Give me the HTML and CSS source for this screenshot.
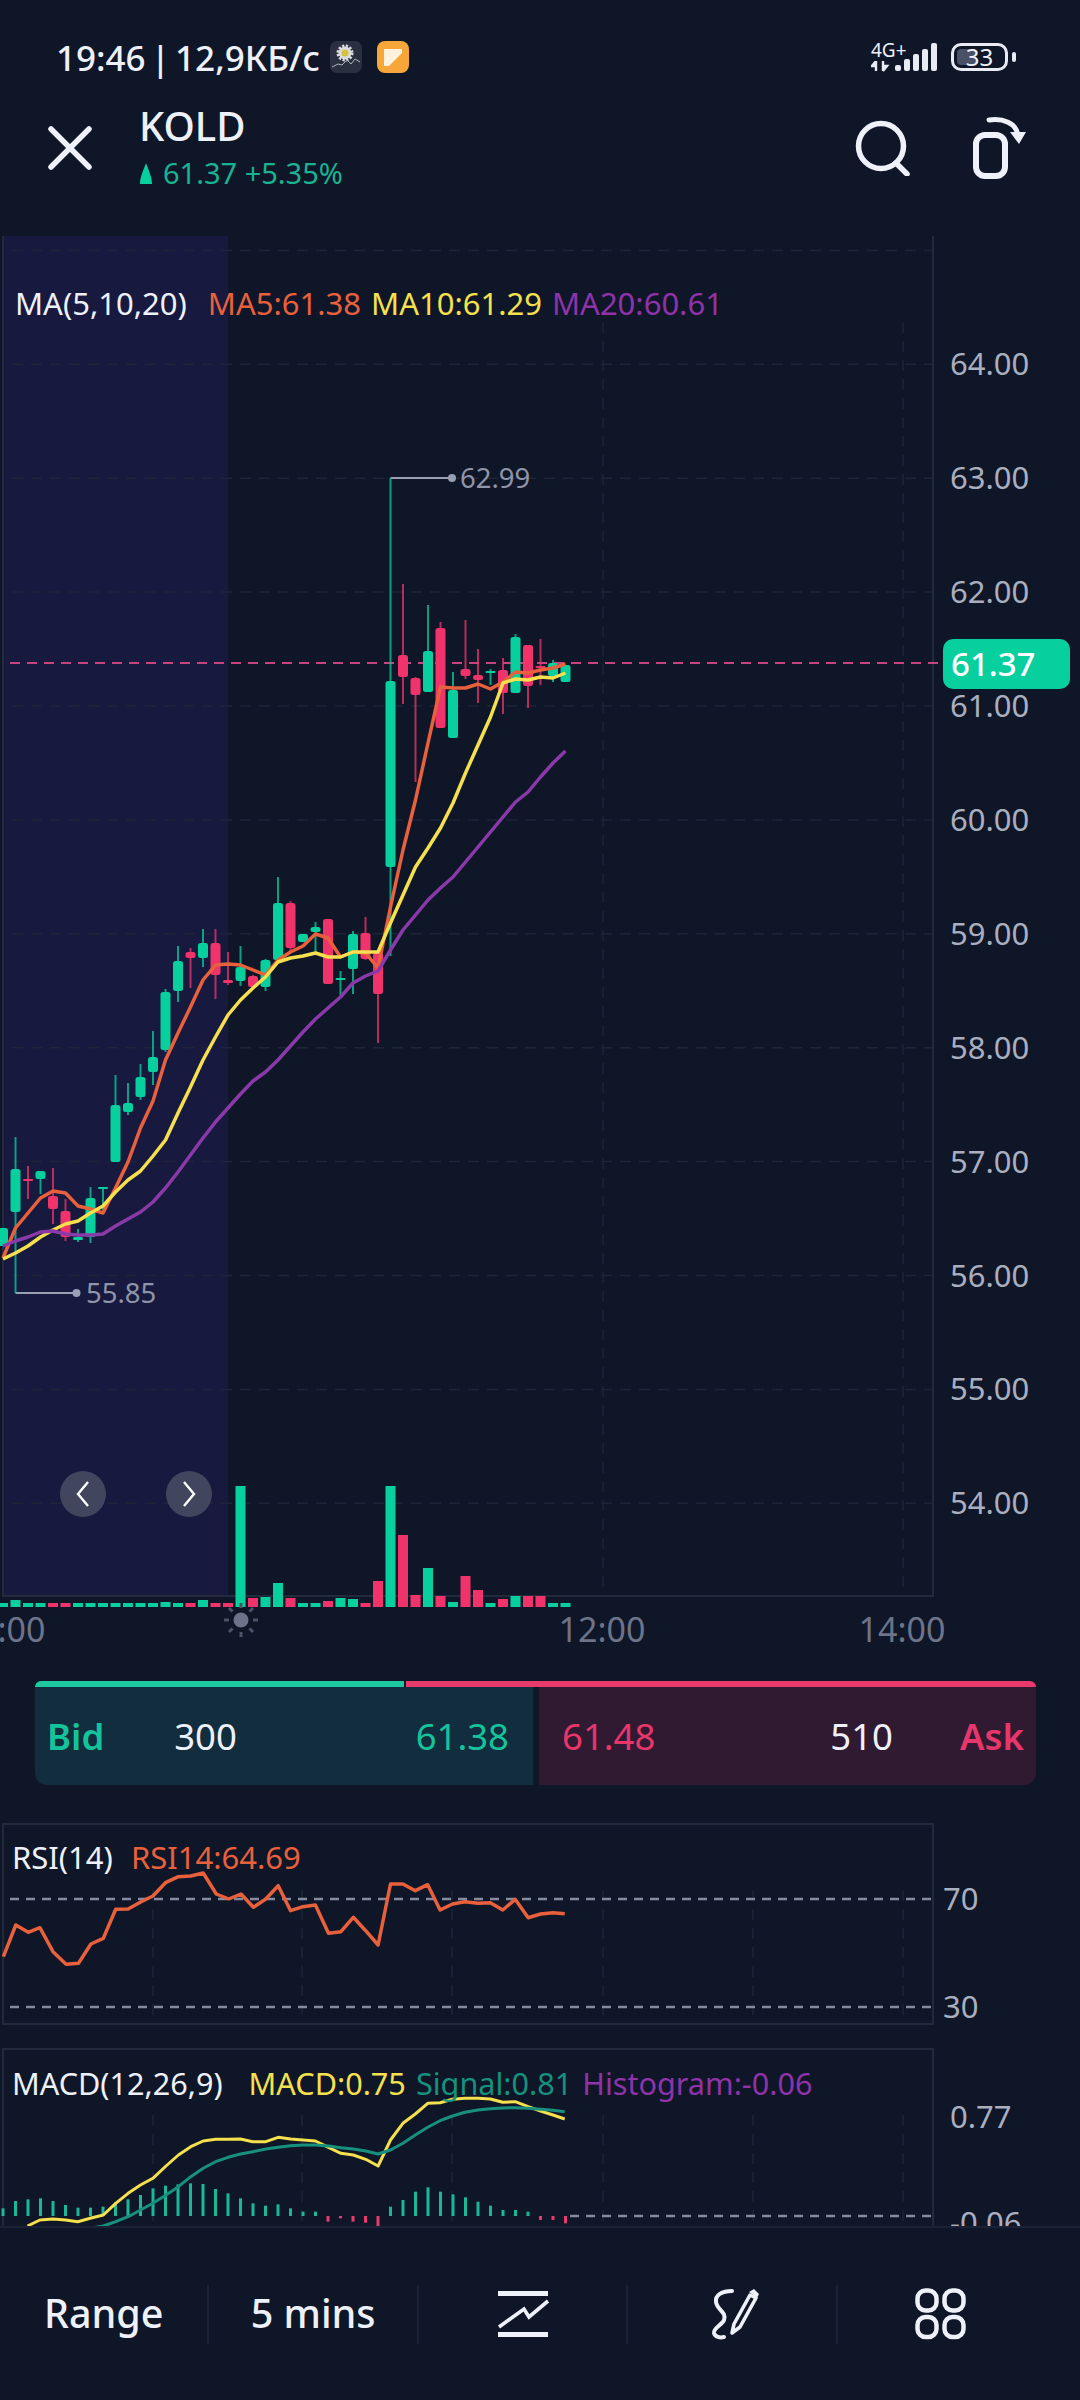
FILE: index.html
```html
<!DOCTYPE html>
<html lang="en">
  <head>
    <meta charset="UTF-8" />
    <meta name="viewport" content="width=device-width, initial-scale=1.0" />
    <title>KOLD</title>
    <link rel="stylesheet" href="styles.css">
  </head>
  <body>
    <div class="status-bar">
      <span class="status-text">19:46 | 12,9КБ/с</span>
      <svg class="app-icon" viewBox="0 0 32 32">
        <rect width="32" height="32" rx="7" fill="#2a3040" />
        <circle cx="15" cy="12" r="6.5" fill="#d9dde2" stroke="#d9dde2" stroke-width="4" stroke-dasharray="2 1.4" />
        <circle cx="15" cy="12" r="3.6" fill="#d8c13c" />
        <path d="M2 26 L8 23 L12 24 L17 19 L21 23 L25 18 L30 21" fill="none" stroke="#aeb3bd" stroke-width="1" />
      </svg>
      <svg class="app-icon" viewBox="0 0 32 32">
        <rect width="32" height="32" rx="8" fill="#f7a63a" />
        <path d="M7 8 H25 V12 L12 25 H7 Z" fill="#fff2dc" />
      </svg>
      <div class="status-right">
        <div class="network">
          <span class="network-type">4G+</span>
          <svg width="20" height="11" viewBox="0 0 20 11">
            <path d="M5 0 V10 M5 0 L1 5 H5 M12 10 V0 M12 10 L16 5 H12" fill="none" stroke="#e8ebf3" stroke-width="2.4" />
          </svg>
        </div>
        <div class="signal">
          <i style="height: 6px"></i>
          <i style="height: 12px"></i>
          <i style="height: 17px"></i>
          <i style="height: 22px"></i>
          <i style="height: 28px"></i>
        </div>
        <div class="battery">
          <div class="battery-level"></div>
          <span class="battery-text">33</span>
        </div>
        <div class="battery-nub"></div>
      </div>
    </div>

    <header class="header">
      <svg class="close-icon" viewBox="0 0 44 44">
        <path d="M3 3 L41 41 M41 3 L3 41" fill="none" stroke="#eef1fa" stroke-width="5.5" stroke-linecap="round" />
      </svg>
      <div class="title-block">
        <div class="symbol">KOLD</div>
        <div class="change">
          <svg width="14" height="21" viewBox="0 0 14 21">
            <path d="M7 0 C8.5 5 13 13 13 21 H1 C1 13 5.5 5 7 0 Z" fill="#07cf9e" />
          </svg>
          <span>61.37 +5.35%</span>
        </div>
      </div>
      <div class="header-actions">
        <svg class="search-icon" viewBox="0 0 56 56">
          <circle cx="26" cy="26" r="22.5" fill="none" stroke="#eef1fa" stroke-width="5.5" />
          <path d="M41 43 L52 54" stroke="#eef1fa" stroke-width="5.5" stroke-linecap="round" />
        </svg>
        <svg class="rotate-icon" viewBox="0 0 64 66">
          <rect x="11" y="20" width="29" height="41" rx="9" fill="none" stroke="#eef1fa" stroke-width="6" />
          <path d="M24 5 C38 3 51 8 53 20" fill="none" stroke="#eef1fa" stroke-width="5" stroke-linecap="round" />
          <path d="M45 17 H61 L54 29 Z" fill="#eef1fa" />
        </svg>
      </div>
    </header>

    <section class="panel main-panel">
      <svg id="mainChart" class="chart" width="1080" height="1434" viewBox="0 236 1080 1434"></svg>
      <div class="legend main-legend">
        <span class="legend-name">MA(5,10,20)</span>
        <span class="orange">MA5:61.38</span>
        <span class="yellow">MA10:61.29</span>
        <span class="purple">MA20:60.61</span>
      </div>
      <button class="nav-btn nav-prev">
        <svg width="16" height="28" viewBox="0 0 16 28"><path d="M13 2 L3 14 L13 26" fill="none" stroke="#fff" stroke-width="2.4" /></svg>
      </button>
      <button class="nav-btn nav-next">
        <svg width="16" height="28" viewBox="0 0 16 28"><path d="M3 2 L13 14 L3 26" fill="none" stroke="#fff" stroke-width="2.4" /></svg>
      </button>
      <div class="price-tag">61.37</div>
    </section>

    <section class="quote">
      <div class="quote-bar">
        <div class="quote-bar-bid"></div>
        <div class="quote-bar-ask"></div>
      </div>
      <div class="quote-body">
        <div class="quote-side quote-bid">
          <span class="quote-label">Bid</span>
          <span class="quote-size">300</span>
          <span class="quote-price">61.38</span>
        </div>
        <div class="quote-side quote-ask">
          <span class="quote-price">61.48</span>
          <span class="quote-size">510</span>
          <span class="quote-label">Ask</span>
        </div>
      </div>
    </section>

    <section class="panel rsi-panel">
      <svg id="rsiChart" class="chart" width="1080" height="203" viewBox="0 1823 1080 203"></svg>
      <div class="legend rsi-legend">
        <span class="legend-name">RSI(14)</span>
        <span class="orange">RSI14:64.69</span>
      </div>
    </section>

    <section class="panel macd-panel">
      <svg id="macdChart" class="chart" width="1080" height="178" viewBox="0 2048 1080 178"></svg>
      <div class="legend macd-legend">
        <span class="legend-name">MACD(12,26,9)</span>
        <span class="yellow">MACD:0.75</span>
        <span class="teal">Signal:0.81</span>
        <span class="purple">Histogram:-0.06</span>
      </div>
    </section>

    <nav class="toolbar">
      <div class="tool">Range</div>
      <div class="tool">5 mins</div>
      <div class="tool">
        <svg width="54" height="48" viewBox="0 0 54 48">
          <path d="M2 3.5 H52 M2 44.5 H52" stroke="#eef1fa" stroke-width="5" />
          <path d="M3 37 L28 19 L33 27 L52 11" fill="none" stroke="#eef1fa" stroke-width="3.6" />
        </svg>
      </div>
      <div class="tool">
        <svg width="54" height="52" viewBox="0 0 54 52">
          <path d="M27 3 C17 3 10 7 11 14 C12 22 22 24 19 32 C17 37 8 40 9 45 C10 49 15 50 19 49" fill="none" stroke="#eef1fa" stroke-width="4" stroke-linecap="round" />
          <path d="M27 45 L29 36 L45 7 L51 10 L35 39 Z" fill="none" stroke="#eef1fa" stroke-width="3.6" stroke-linejoin="round" />
          <path d="M44 4 L49 1 L54 6 L52 10 Z" fill="#eef1fa" />
        </svg>
      </div>
      <div class="tool">
        <svg width="52" height="52" viewBox="0 0 52 52">
          <rect x="2.5" y="2.5" width="19" height="20" rx="8" />
          <rect x="29.5" y="2.5" width="19" height="20" rx="8" />
          <rect x="2.5" y="29" width="19" height="20" rx="8" />
          <rect x="29.5" y="29" width="19" height="20" rx="8" />
        </svg>
      </div>
    </nav>

    <script src="chart.js"></script>
  </body>
</html>
```

FILE: styles.css
```css
/* KOLD chart screen */
body {
  font-family: "Noto Sans", "Open Sans", sans-serif;
  background-color: #0f1628;
  margin: 0;
  padding: 0;
  color: #eef1fa;
  width: 1080px;
  height: 2400px;
  overflow: hidden;
}

.status-bar {
  display: flex;
  align-items: center;
  box-sizing: border-box;
  height: 100px;
  padding: 14px 64px 0 56px;
}

.status-text {
  font-size: 35px;
  font-weight: 500;
  word-spacing: -4px;
  margin-right: 10px;
}

.app-icon {
  width: 32px;
  height: 32px;
  margin-right: 15px;
}

.status-right {
  display: flex;
  align-items: center;
  margin-left: auto;
}

.network {
  display: flex;
  flex-direction: column;
  align-items: flex-start;
  width: 24px;
  margin-top: -2px;
}

.network-type {
  font-size: 19px;
  line-height: 20px;
  white-space: nowrap;
}

.network svg {
  margin-top: 1px;
}

.signal {
  display: flex;
  align-items: flex-end;
  gap: 3px;
  height: 28px;
  margin-right: 14px;
}

.signal i {
  display: block;
  width: 6px;
  background-color: #e8ebf3;
  border-radius: 2px;
}

.battery {
  position: relative;
  display: flex;
  align-items: center;
  justify-content: center;
  box-sizing: border-box;
  width: 57px;
  height: 28px;
  border: 3px solid #e8ebf3;
  border-radius: 10px;
}

.battery-level {
  position: absolute;
  left: 3px;
  top: 3px;
  bottom: 3px;
  width: 19px;
  background-color: #4a5066;
  border-radius: 4px;
}

.battery-text {
  position: relative;
  font-size: 24px;
  line-height: 22px;
}

.battery-nub {
  width: 4px;
  height: 10px;
  margin-left: 4px;
  background-color: #e8ebf3;
  border-radius: 2px;
}

.header {
  display: flex;
  align-items: flex-start;
  height: 136px;
  padding: 0 51px 0 48px;
}

.close-icon {
  width: 44px;
  height: 44px;
  margin: 26px 47px 0 0;
}

.symbol {
  font-size: 40px;
  font-weight: 500;
  line-height: 44px;
  margin-top: 4px;
}

.change {
  display: flex;
  align-items: center;
  gap: 10px;
  font-size: 29px;
  line-height: 38px;
  color: #19b392;
  margin-top: 6px;
}

.header-actions {
  display: flex;
  gap: 54px;
  margin-left: auto;
}

.search-icon {
  width: 56px;
  height: 56px;
  margin-top: 20px;
}

.rotate-icon {
  width: 64px;
  height: 66px;
  margin-top: 15px;
}

.panel {
  position: relative;
}

.chart {
  display: block;
}

.grid-line {
  stroke: #1f2538;
  stroke-width: 1.5;
  stroke-dasharray: 11 8;
  fill: none;
}

.frame-line {
  stroke: #232a3e;
  stroke-width: 2;
  fill: none;
}

.axis-label {
  font-size: 31px;
  fill: #a9afbf;
}

.time-label {
  font-size: 34px;
  fill: #6d7489;
  text-anchor: middle;
}

.peak-label {
  font-size: 27.5px;
  fill: #8f94a9;
}

.legend {
  position: absolute;
  display: flex;
  gap: 10px;
  font-size: 31px;
  line-height: 40px;
  white-space: nowrap;
}

.legend-name {
  margin-right: 11px;
}

.main-legend {
  left: 15px;
  top: 47px;
}

.rsi-legend {
  left: 12px;
  top: 14px;
}

.rsi-legend .legend-name {
  margin-right: 8px;
}

.macd-legend {
  left: 12px;
  top: 15px;
  font-size: 30.6px;
}

.macd-legend .legend-name {
  margin-right: 16px;
}

.orange {
  color: #e8603c;
}

.yellow {
  color: #f5e14d;
}

.purple {
  color: #8f33a8;
}

.teal {
  color: #17907e;
}

/* buttons that sit over the highlighted session */
.nav-btn {
  position: absolute;
  top: 1235px;
  display: flex;
  align-items: center;
  justify-content: center;
  width: 46px;
  height: 46px;
  padding: 0;
  border: none;
  border-radius: 50%;
  background-color: #41465e;
}

.nav-prev {
  left: 60px;
}

.nav-next {
  left: 166px;
}

.price-tag {
  position: absolute;
  left: 943px;
  top: 403px;
  box-sizing: border-box;
  width: 127px;
  height: 50px;
  padding-left: 8px;
  font-size: 33px;
  font-weight: 500;
  line-height: 50px;
  color: #fff;
  background-color: #07cf9e;
  border-radius: 10px;
}

.quote {
  margin: 11px 44px 0 35px;
}

.quote-bar {
  display: flex;
  gap: 2px;
  height: 6px;
}

.quote-bar-bid {
  width: 369px;
  background-color: #1dc9a1;
  border-radius: 6px 0 0 0;
}

.quote-bar-ask {
  flex: 1;
  background-color: #e83a6c;
  border-radius: 0 6px 0 0;
}

.quote-body {
  display: flex;
  gap: 6px;
  height: 98px;
  font-size: 36.5px;
}

.quote-side {
  display: flex;
  align-items: center;
  box-sizing: border-box;
  flex: 1;
}

.quote-bid {
  padding: 0 24px 0 12px;
  background-color: #122d3d;
  border-radius: 0 0 0 12px;
}

.quote-ask {
  padding: 0 12px 0 23px;
  background-color: #2f1a32;
  border-radius: 0 0 12px 0;
}

.quote-bid .quote-label,
.quote-bid .quote-price {
  color: #14c39b;
}

.quote-ask .quote-label,
.quote-ask .quote-price {
  color: #e8366b;
}

.quote-label {
  font-weight: 600;
}

.quote-bid .quote-size {
  margin-left: 70px;
  margin-right: auto;
}

.quote-ask .quote-size {
  margin-left: auto;
  margin-right: 67px;
}

.rsi-panel {
  margin-top: 38px;
}

.macd-panel {
  margin-top: 22px;
}

.toolbar {
  display: flex;
  box-sizing: border-box;
  height: 174px;
  padding: 57px 35px 0 0;
  border-top: 2px solid #1b2235;
}

.tool {
  display: flex;
  align-items: center;
  justify-content: center;
  box-sizing: border-box;
  flex: 1;
  height: 59px;
  padding-bottom: 2px;
  font-size: 39.5px;
  font-weight: 500;
  line-height: 57px;
  border-right: 2px solid #1b2235;
}

.tool:last-child {
  border-right: none;
}

.tool rect {
  fill: none;
  stroke: #eef1fa;
  stroke-width: 4.5;
}
```

FILE: chart.js
```js
var GREEN = "#07cf9e";
var RED = "#f0346b";
var SVG_NS = "http://www.w3.org/2000/svg";

// x of a bar, one bar is 12.5px wide
function barX(i) {
  return 15.5 + 12.5 * i;
}

function add(svg, tag, attrs, text) {
  var el = document.createElementNS(SVG_NS, tag);
  for (var k in attrs) {
    el.setAttribute(k, attrs[k]);
  }
  if (text) {
    el.textContent = text;
  }
  svg.appendChild(el);
  return el;
}

// one y for each bar, from bar "first" on
function addLine(svg, ys, first, color, width) {
  var points = ys.map(function (y, i) {
    return barX(first + i) + "," + y;
  });
  add(svg, "polyline", {
    points: points.join(" "),
    fill: "none",
    stroke: color,
    "stroke-width": width,
    "stroke-linejoin": "round",
  });
}

// [bodyTop, bodyBottom, wickTop, wickBottom, color], starting at bar -1
var candles = [
  [1228, 1246, 1228, 1246, "g"],
  [1169, 1212, 1137, 1293, "g"],
  [1179, 1181, 1166, 1199, "r"],
  [1171, 1179, 1171, 1194, "g"],
  [1196, 1209, 1168, 1224, "r"],
  [1211, 1237, 1199, 1241, "r"],
  [1237, 1240, 1229, 1242, "g"],
  [1198, 1237, 1187, 1243, "g"],
  [1187, 1189, 1187, 1210, "g"],
  [1105, 1162, 1075, 1162, "g"],
  [1103, 1112, 1083, 1115, "g"],
  [1077, 1097, 1064, 1100, "g"],
  [1057, 1072, 1031, 1085, "g"],
  [992, 1050, 989, 1052, "g"],
  [961, 991, 946, 1002, "g"],
  [952, 958, 948, 988, "r"],
  [943, 958, 929, 967, "g"],
  [943, 975, 929, 999, "r"],
  [980, 983, 952, 985, "r"],
  [967, 981, 946, 986, "g"],
  [976, 987, 975, 988, "r"],
  [960, 987, 959, 991, "g"],
  [903, 960, 877, 962, "g"],
  [903, 948, 901, 952, "r"],
  [934, 942, 934, 942, "g"],
  [927, 932, 922, 952, "g"],
  [919, 984, 919, 984, "r"],
  [978, 980, 971, 995, "g"],
  [934, 969, 931, 994, "g"],
  [933, 959, 917, 960, "r"],
  [953, 994, 953, 1043, "r"],
  [681, 867, 478, 956, "g"],
  [655, 677, 584, 704, "r"],
  [678, 695, 677, 782, "r"],
  [651, 692, 605, 692, "g"],
  [628, 728, 622, 728, "r"],
  [690, 738, 672, 738, "g"],
  [669, 676, 620, 679, "r"],
  [675, 680, 649, 703, "r"],
  [671, 673, 669, 685, "g"],
  [670, 693, 658, 714, "r"],
  [637, 693, 634, 693, "g"],
  [645, 686, 645, 708, "r"],
  [666, 668, 639, 685, "r"],
  [663, 676, 660, 682, "g"],
  [665, 682, 665, 682, "g"],
];

// heights from the bottom of the volume bars, starting at bar -1
var volumes = [
  [4, "g"], [7, "g"], [4, "g"], [4, "g"], [4, "r"], [4, "r"], [4, "g"], [4, "g"],
  [4, "g"], [4, "g"], [4, "g"], [4, "g"], [4, "g"], [5, "g"], [4, "g"], [4, "r"],
  [7, "g"], [4, "r"], [4, "r"], [121, "g"], [9, "r"], [10, "g"], [24, "g"], [9, "r"],
  [4, "g"], [4, "g"], [6, "r"], [9, "g"], [8, "g"], [4, "r"], [26, "r"], [121, "g"],
  [72, "r"], [12, "r"], [39, "g"], [11, "r"], [5, "g"], [31, "r"], [17, "r"], [4, "g"],
  [8, "r"], [11, "g"], [11, "r"], [11, "r"], [4, "g"], [4, "g"],
];

// moving averages start at bar -1
var ma5 = [1258, 1228, 1213, 1198, 1191, 1193, 1206, 1209, 1213, 1188, 1162, 1128, 1101, 1060, 1033, 1007, 980, 965, 964, 965, 970, 975, 960, 952, 946, 934, 938, 957, 952, 953, 968, 907, 850, 800, 743, 687, 688, 688, 684, 689, 682, 672, 673, 670, 668, 664];
var ma10 = [1259, 1253, 1246, 1237, 1230, 1224, 1221, 1213, 1206, 1192, 1180, 1171, 1156, 1140, 1113, 1087, 1060, 1037, 1015, 1000, 988, 977, 962, 958, 956, 953, 957, 957, 952, 952, 952, 923, 895, 867, 848, 828, 803, 773, 745, 717, 683, 679, 680, 677, 678, 673];
var ma20 = [1246, 1241, 1237, 1232, 1231, 1234, 1235, 1235, 1234, 1226, 1219, 1212, 1202, 1188, 1172, 1155, 1138, 1122, 1108, 1094, 1081, 1072, 1060, 1046, 1032, 1019, 1008, 997, 983, 976, 971, 950, 930, 915, 900, 888, 877, 862, 847, 832, 817, 802, 792, 777, 763, 751];

function drawMain() {
  var svg = document.getElementById("mainChart");
  add(svg, "rect", { x: 3, y: 236, width: 225, height: 1360, fill: "#17193f" });

  for (var p = 65; p >= 54; p--) {
    var y = 706 + (61 - p) * 113.9;
    add(svg, "line", { class: "grid-line", x1: 12, x2: 933, y1: y, y2: y });
    if (p < 65) {
      add(svg, "text", { class: "axis-label", x: 950, y: y + 11 }, p + ".00");
    }
  }
  [603, 903].forEach(function (x) {
    add(svg, "line", { class: "grid-line", x1: x, x2: x, y1: 322, y2: 1596 });
  });
  add(svg, "path", { class: "frame-line", d: "M3 236 V1596 H933 V236" });

  add(svg, "line", { x1: 10, x2: 943, y1: 663, y2: 663, stroke: "#c8447f", "stroke-width": 2, "stroke-dasharray": "10 7" });

  // high and low markers
  add(svg, "path", { d: "M390.5 478 H452 M15.5 1293 H76", stroke: "#9aa0b3", "stroke-width": 2, fill: "none" });
  add(svg, "circle", { cx: 452, cy: 478, r: 4, fill: "#9aa0b3" });
  add(svg, "circle", { cx: 76.5, cy: 1293, r: 4, fill: "#9aa0b3" });
  add(svg, "text", { class: "peak-label", x: 460, y: 488 }, "62.99");
  add(svg, "text", { class: "peak-label", x: 86, y: 1303 }, "55.85");

  volumes.forEach(function (v, i) {
    add(svg, "rect", { x: barX(i - 1) - 5, y: 1607 - v[0], width: 10, height: v[0], fill: v[1] == "g" ? GREEN : RED });
  });

  candles.forEach(function (c, i) {
    var x = barX(i - 1);
    var color = c[4] == "g" ? GREEN : RED;
    add(svg, "line", { x1: x, x2: x, y1: c[2], y2: c[3], stroke: color, "stroke-width": 2, opacity: 0.75 });
    add(svg, "rect", { x: x - 5, y: c[0], width: 10, height: c[1] - c[0], rx: Math.min(2.5, (c[1] - c[0]) / 2), fill: color });
  });

  addLine(svg, ma5, -1, "#e8603c", 3.5);
  addLine(svg, ma10, -1, "#f6e04e", 3.5);
  addLine(svg, ma20, -1, "#8a3aa8", 3.5);

  // 10:00 sits under the sun marker
  add(svg, "text", { class: "time-label", x: 2, y: 1642 }, "08:00");
  add(svg, "text", { class: "time-label", x: 602, y: 1642 }, "12:00");
  add(svg, "text", { class: "time-label", x: 902, y: 1642 }, "14:00");

  // sun marker
  add(svg, "circle", { cx: 241, cy: 1620, r: 7.5, fill: "#6b7388" });
  for (var a = 0; a < 8; a++) {
    var r = (a * Math.PI) / 4;
    add(svg, "line", {
      x1: 241 + Math.cos(r) * 12,
      y1: 1620 + Math.sin(r) * 12,
      x2: 241 + Math.cos(r) * 17,
      y2: 1620 + Math.sin(r) * 17,
      stroke: "#4c5369",
      "stroke-width": 3,
    });
  }
}

function drawRsi() {
  var svg = document.getElementById("rsiChart");
  [153, 302, 452, 603, 753, 903].forEach(function (x) {
    add(svg, "line", { class: "grid-line", x1: x, x2: x, y1: 1890, y2: 2018 });
  });
  add(svg, "rect", { class: "frame-line", x: 3, y: 1824, width: 930, height: 200 });
  [[1899, "70"], [2007, "30"]].forEach(function (l) {
    add(svg, "line", { x1: 10, x2: 933, y1: l[0], y2: l[0], stroke: "#858b9e", "stroke-width": 2.5, "stroke-dasharray": "9 7" });
    add(svg, "text", { class: "axis-label", x: 943, y: l[0] + 11 }, l[1]);
  });
  // traced from the screen: x is scaled 1.452, y is in thirds from 1800
  var pts = [[5,470],[23,375],[41,397],[58,383],[77,455],[96,493],[114,490],[132,432],[150,415],[168,328],[186,327],[205,305],[222,288],[241,247],[259,230],[277,228],[295,219],[314,282],[332,297],[350,282],[368,322],[386,297],[404,257],[422,332],[440,320],[458,315],[477,400],[495,395],[513,352],[531,392],[549,435],[567,252],[585,252],[603,272],[621,254],[639,330],[657,312],[675,305],[694,310],[712,308],[730,330],[748,298],[767,353],[785,342],[803,338],[820,341]];
  add(svg, "polyline", {
    points: pts.map(function (p) { return (p[0] / 1.452).toFixed(1) + "," + (1800 + p[1] / 3).toFixed(1); }).join(" "),
    fill: "none",
    stroke: "#e8603c",
    "stroke-width": 3.5,
    "stroke-linejoin": "round",
  });
}

function drawMacd() {
  var svg = document.getElementById("macdChart");
  [153, 302, 452, 603, 753, 903].forEach(function (x) {
    add(svg, "line", { class: "grid-line", x1: x, x2: x, y1: 2115, y2: 2226 });
  });
  add(svg, "path", { class: "frame-line", d: "M3 2226 V2049 H933 V2226" });
  add(svg, "line", { x1: 570, x2: 933, y1: 2216, y2: 2216, stroke: "#858b9e", "stroke-width": 2.5, "stroke-dasharray": "9 7" });
  add(svg, "text", { class: "axis-label", x: 950, y: 2128 }, "0.77");
  add(svg, "text", { class: "axis-label", x: 950, y: 2234 }, "-0.06");

  var bars = [505,483,478,475,483,495,503,503,500,487,478,465,445,437,433,430,432,447,460,475,490,497,493,505,515,515,545,535,545,548,560,500,480,455,442,455,463,472,485,497,510,510,515,540,540,550];
  bars.forEach(function (b, i) {
    var y = 2040 + b / 3;
    add(svg, "rect", {
      x: barX(i - 1) - 1.5,
      y: Math.min(y, 2216),
      width: 3,
      height: Math.abs(y - 2216),
      fill: b > 527 ? "#e83a6c" : "#1bb897",
    });
  });

  var signal = [[130,565],[150,558],[168,545],[186,530],[204,510],[222,490],[241,465],[259,440],[277,410],[295,385],[313,365],[331,352],[349,342],[367,335],[386,327],[404,322],[422,317],[440,315],[458,315],[477,318],[495,323],[513,327],[531,333],[549,342],[567,330],[585,310],[603,285],[621,262],[639,242],[657,228],[675,217],[694,210],[712,206],[730,204],[748,203],[767,205],[785,208],[803,211],[820,215]];
  var macd = [[40,558],[58,540],[77,537],[95,540],[113,545],[131,535],[150,525],[168,490],[186,460],[204,435],[222,415],[241,378],[259,345],[277,320],[295,303],[313,298],[331,298],[349,297],[367,305],[386,305],[404,292],[422,297],[440,300],[458,303],[477,322],[495,340],[513,345],[531,358],[549,378],[567,300],[585,250],[603,222],[621,190],[639,188],[657,178],[675,175],[694,175],[712,177],[730,187],[748,185],[767,200],[785,213],[803,225],[820,237]];
  [[macd, "#f6e04e"], [signal, "#17907e"]].forEach(function (s) {
    add(svg, "polyline", {
      points: s[0].map(function (p) { return (p[0] / 1.452).toFixed(1) + "," + (2040 + p[1] / 3).toFixed(1); }).join(" "),
      fill: "none",
      stroke: s[1],
      "stroke-width": 3,
      "stroke-linejoin": "round",
    });
  });
}

drawMain();
drawRsi();
drawMacd();
```
